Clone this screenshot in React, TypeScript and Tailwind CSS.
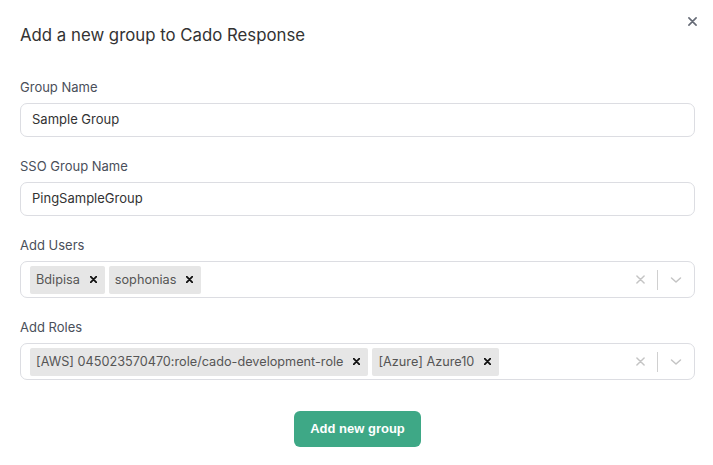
import React from 'react';

function XMark({ size = 8, color = '#000', stroke = 2 }: { size?: number; color?: string; stroke?: number }) {
  return (
    <svg width={size} height={size} viewBox="0 0 10 10" fill="none">
      <path d="M1 1L9 9M9 1L1 9" stroke={color} strokeWidth={stroke} strokeLinecap="round" />
    </svg>
  );
}

function Chip({ label }: { label: string }) {
  return (
    <div className="flex items-center h-[28px] bg-[#e6e6e6] rounded-[2px] pl-[6px] pr-[8px] mr-[4px]">
      <span className="text-[12.7px] text-[#555]">{label}</span>
      <span className="ml-[10px] flex items-center">
        <XMark size={7} color="#111" stroke={2.6} />
      </span>
    </div>
  );
}

function TextField({ label, value }: { label: string; value: string }) {
  return (
    <div className="mb-5">
      <label className="block text-[13px] leading-[18px] text-[#4a4f5a] mb-[7px]">{label}</label>
      <div className="h-[34px] border border-[#dcdde2] rounded-[7px] flex items-center px-[11px] text-[13px] text-[#333]">
        {value}
      </div>
    </div>
  );
}

function MultiSelect({ label, values }: { label: string; values: string[] }) {
  return (
    <div className="mb-5">
      <label className="block text-[13px] leading-[18px] text-[#4a4f5a] mb-[7px]">{label}</label>
      <div className="h-[37px] border border-[#dcdde2] rounded-[7px] flex items-center pl-[9px]">
        <div className="flex flex-1 items-center">
          {values.map((v) => (
            <Chip key={v} label={v} />
          ))}
        </div>
        <div className="flex items-center pr-[4px]">
          <div className="px-[12px] flex items-center">
            <XMark size={9} color="#c4c4c4" stroke={1.6} />
          </div>
          <div className="w-px h-[20px] bg-[#d0d0d0]" />
          <div className="pl-[12px] pr-[8px] flex items-center">
            <svg width="12" height="8" viewBox="0 0 12 8" fill="none">
              <path d="M1.5 2L6 6L10.5 2" stroke="#c4c4c4" strokeWidth="1.5" strokeLinecap="round" strokeLinejoin="round" />
            </svg>
          </div>
        </div>
      </div>
    </div>
  );
}

export default function App() {
  return (
    <div className="w-[713px] h-[465px] bg-white relative pl-5 pr-[18px] pt-[23px]" style={{ fontFamily: 'Inter, "Noto Sans", sans-serif' }}>
      <button className="absolute top-[16px] right-[16px] w-[10px] h-[10px] flex items-center justify-center">
        <XMark size={9} color="#666b76" stroke={1.8} />
      </button>
      <h2 className="text-[16.8px] leading-[24px] text-[#333] mb-[31px]">Add a new group to Cado Response</h2>
      <TextField label="Group Name" value="Sample Group" />
      <TextField label="SSO Group Name" value="PingSampleGroup" />
      <MultiSelect label="Add Users" values={['Bdipisa', 'sophonias']} />
      <MultiSelect label="Add Roles" values={['[AWS] 045023570470:role/cado-development-role', '[Azure] Azure10']} />
      <div className="flex justify-center pt-[11px]">
        <button
          className="h-[36px] px-[16px] rounded-[6px] bg-[#3ea886] text-white text-[13px] font-bold"
          style={{ fontFamily: '"Liberation Sans", Arial, sans-serif' }}
        >
          Add new group
        </button>
      </div>
    </div>
  );
}
